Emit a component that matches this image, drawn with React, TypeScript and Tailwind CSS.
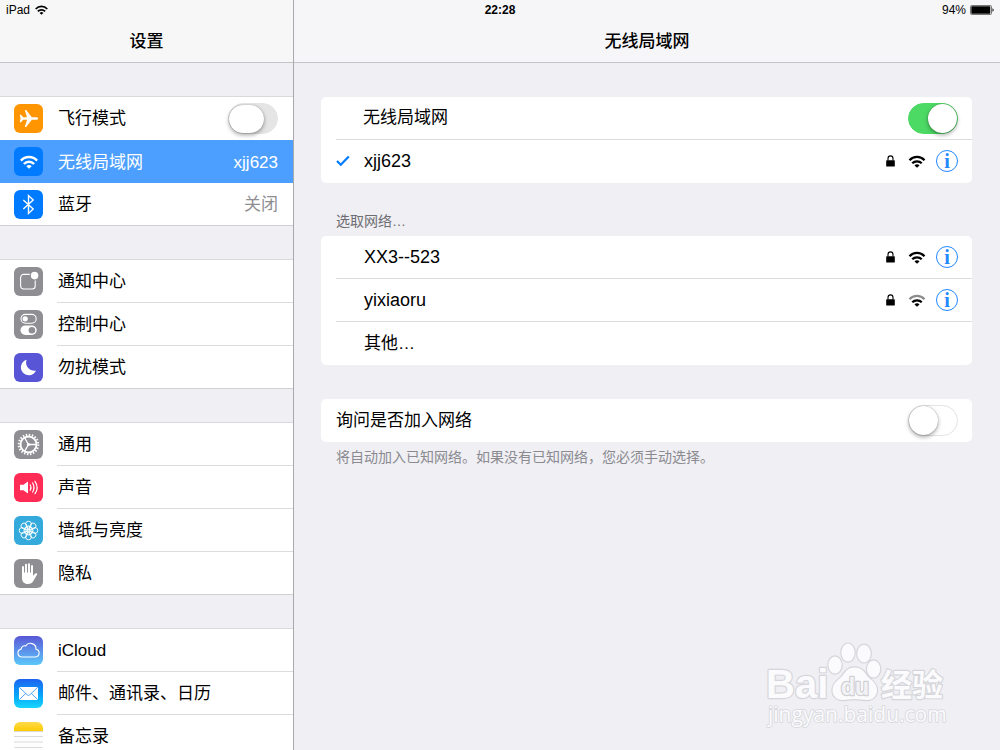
import React from 'react';

const IconAirplane = () => (
  <svg viewBox="0 0 29 29" className="h-full w-full">
    <path
      fill="#fff"
      d="M24.2 14.500c0 .8-1 1.300-2.200 1.300h-4.200l-5.600 7.100h-1.400l2.200-7.100H9.200L7 18.200H5.800l.7-3.700-.7-3.700H7l2.200 2.400h3.800l-2.200-7.100h1.400l5.600 7.100H22c1.200 0 2.200.5 2.200 1.300z"
    />
  </svg>
);

const WifiGlyph: React.FC<{ className?: string; weak?: boolean }> = ({ className, weak }) => (
  <svg viewBox="0 0 18 14" className={className} fill="none" stroke="currentColor">
    <path d="M.9 5.600a11 11 0 0 1 16.200 0" strokeWidth="2.4" opacity={weak ? 0.45 : 1} />
    <path d="M3.900 9a7 7 0 0 1 10.200 0" strokeWidth="2.4" />
    <path d="M9 13.800l-2.700-2.600a3.700 3.700 0 0 1 5.400 0z" fill="currentColor" stroke="none" />
  </svg>
);

const IconWifiTile = () => (
  <span className="flex h-full w-full items-center justify-center text-white">
    <WifiGlyph className="h-[14px] w-[18px]" />
  </span>
);

const IconBluetooth = () => (
  <svg viewBox="0 0 29 29" className="h-full w-full" fill="none" stroke="#fff" strokeWidth="1.4">
    <path d="M9.3 10l9.9 9-4.7 4.400V5.600l4.700 4.400-9.900 9" />
  </svg>
);

const IconNotifications = () => (
  <svg viewBox="0 0 29 29" className="h-full w-full">
    <rect x="6.6" y="7.4" width="14.6" height="14.6" rx="3" fill="none" stroke="#fff" strokeWidth="1.1" />
    <circle cx="20.6" cy="8.6" r="4.4" fill="#fff" stroke="#8e8e93" strokeWidth="1.2" />
  </svg>
);

const IconControl = () => (
  <svg viewBox="0 0 29 29" className="h-full w-full">
    <rect x="7" y="4.4" width="15.2" height="8.8" rx="4.4" fill="none" stroke="#fff" strokeWidth="1.1" />
    <circle cx="11.2" cy="8.8" r="2.6" fill="#fff" />
    <rect x="6.5" y="15.4" width="16.2" height="9.6" rx="4.8" fill="#fff" />
    <circle cx="17.9" cy="20.2" r="3.3" fill="#8e8e93" />
  </svg>
);

const IconMoon = () => (
  <svg viewBox="0 0 29 29" className="h-full w-full">
    <path fill="#fff" d="M12.6 6.8a7.900 7.900 0 1 0 9.400 10.800A8.200 8.200 0 0 1 12.600 6.800z" />
  </svg>
);

const IconGear = () => (
  <svg viewBox="0 0 29 29" className="h-full w-full" fill="none" stroke="#fff">
    <circle cx="14.5" cy="14.5" r="9.8" strokeWidth="2" strokeDasharray="1.5 1.58" />
    <circle cx="14.5" cy="14.5" r="8" strokeWidth="1.9" />
    <path d="M14.5 14.500h7.500M14.500 14.500l-3.800-6.600M14.500 14.500l-3.800 6.600" strokeWidth="1.3" />
    <circle cx="14.5" cy="14.5" r="1.6" fill="#fff" stroke="none" />
  </svg>
);

const IconSound = () => (
  <svg viewBox="0 0 29 29" className="h-full w-full" fill="none" stroke="#fff" strokeLinecap="round">
    <path d="M6 11.800h3.400l4.600-3.400v12.200l-4.600-3.400H6z" fill="#fff" stroke="none" />
    <path d="M16.200 11.800q1.600 2.700 0 5.400M18.600 10q2.800 4.500 0 9M21 8.300q4.200 6.200 0 12.400" strokeWidth="1.2" />
  </svg>
);

const IconFlower = () => (
  <svg viewBox="0 0 29 29" className="h-full w-full" fill="none" stroke="#fff" strokeWidth="0.9">
    {[0, 45, 90, 135, 180, 225, 270, 315].map(angle => (
      <g key={angle} transform={`rotate(${angle} 14.5 14.5)`}>
        <circle cx="14.5" cy="8.1" r="2.9" />
        <ellipse cx="14.5" cy="11.8" rx="1.3" ry="1.9" />
      </g>
    ))}
  </svg>
);

const IconHand = () => (
  <svg viewBox="0 0 29 29" className="h-full w-full" fill="none" stroke="#fff" strokeLinecap="round">
    <path d="M9 8v8M12 5.800v10M15 5.200v10M18 7v9" strokeWidth="2" />
    <path
      fill="#fff"
      stroke="none"
      d="M8 13.500h11v3.600c1.200-1.600 2.200-3 3.600-2.800.8.1.8.6.5 1.200l-3.600 6.300c-1.300 2.200-2.900 3.200-5.600 3.200-3.800 0-5.900-2.200-5.900-6z"
    />
  </svg>
);

const IconCloud = () => (
  <svg viewBox="0 0 29 29" className="h-full w-full" fill="none" stroke="#fff" strokeWidth="1.1">
    <path d="M7.800 21a4 4 0 0 1-.7-7.900 3.600 3.600 0 0 1 4.600-3.200 5.600 5.600 0 0 1 10.300 3.400 3.900 3.900 0 0 1-.4 7.700z" />
  </svg>
);

const IconMail = () => (
  <svg viewBox="0 0 29 29" className="h-full w-full" fill="none" stroke="#3a9bf8" strokeWidth="0.9">
    <rect x="5" y="8" width="19" height="13" rx="1.2" fill="#fff" stroke="none" />
    <path d="M5.400 8.400l7.800 7.400q1.300 1.100 2.600 0l7.800-7.400M5.400 20.600l6.300-6.200M23.600 20.600l-6.300-6.200" />
  </svg>
);

const IconNotes = () => (
  <svg viewBox="0 0 29 29" className="h-full w-full">
    <defs>
      <linearGradient id="notes" x1="0" y1="0" x2="0" y2="1">
        <stop offset="0" stopColor="#ffdb4c" />
        <stop offset="1" stopColor="#fecb02" />
      </linearGradient>
    </defs>
    <rect width="29" height="29" fill="#fdfdfd" />
    <rect width="29" height="9" fill="url(#notes)" />
    <path d="M0 9.500h29M0 14.500h29M0 20h29M0 25.500h29" stroke="#cfcfd2" strokeWidth="0.8" />
  </svg>
);

const LockGlyph = () => (
  <svg viewBox="0 0 15 12" className="h-3 w-[15px]">
    <path d="M5 5.500V3.400a2.500 2.500 0 0 1 5 0v2.100" fill="none" stroke="#000" strokeWidth="1.1" />
    <rect x="3.2" y="5.2" width="8.6" height="6.3" rx="0.6" />
  </svg>
);

const CheckGlyph = () => (
  <svg viewBox="0 0 14 12" className="h-3 w-[14px]" fill="none" stroke="#007aff" strokeWidth="2.2">
    <path d="M1 6l3.800 3.800L12.800 1.600" />
  </svg>
);

type Item = { label: string; icon: React.ReactNode; tile: string; value?: string; active?: boolean };

const network: Item[] = [
  { label: '无线局域网', icon: <IconWifiTile />, tile: 'bg-[#007aff]', value: 'xjj623', active: true },
  { label: '蓝牙', icon: <IconBluetooth />, tile: 'bg-[#007aff]', value: '关闭' },
];

const groups: Item[][] = [
  [
    { label: '通知中心', icon: <IconNotifications />, tile: 'bg-[#8e8e93]' },
    { label: '控制中心', icon: <IconControl />, tile: 'bg-[#8e8e93]' },
    { label: '勿扰模式', icon: <IconMoon />, tile: 'bg-[#5856d6]' },
  ],
  [
    { label: '通用', icon: <IconGear />, tile: 'bg-[#8e8e93]' },
    { label: '声音', icon: <IconSound />, tile: 'bg-[#ff2d55]' },
    { label: '墙纸与亮度', icon: <IconFlower />, tile: 'bg-[#34aadc]' },
    { label: '隐私', icon: <IconHand />, tile: 'bg-[#8e8e93]' },
  ],
  [
    { label: 'iCloud', icon: <IconCloud />, tile: 'bg-linear-to-b from-[#5856d6] to-[#5ac8fa]' },
    { label: '邮件、通讯录、日历', icon: <IconMail />, tile: 'bg-linear-to-b from-[#1d62f0] to-[#1ad5fd]' },
    { label: '备忘录', icon: <IconNotes />, tile: 'bg-white' },
  ],
];

const Tile: React.FC<{ tile: string; children: React.ReactNode }> = ({ tile, children }) => (
  <span className={`h-[29px] w-[29px] shrink-0 overflow-hidden rounded-[6px] ${tile}`}>{children}</span>
);

const groupClass = 'border-b border-[#d0d0d4] bg-white shadow-[0_-1px_0_#d9d9dd]';

const SidebarRow: React.FC<{ item: Item; last: boolean }> = ({ item, last }) => (
  <li className={item.active ? 'bg-[#4c9fff]' : ''}>
    <a href="#" className={`flex items-center pl-[14px] ${last ? 'h-[42px]' : 'h-[43px]'}`}>
      <Tile tile={item.tile}>{item.icon}</Tile>
      <span
        className={`ml-[14px] flex h-full flex-1 items-center justify-between pt-[2px] pr-[15px] pl-px ${
          last || item.active ? '' : 'border-b border-[#dcdcdf]'
        } ${item.active ? 'text-white' : ''}`}
      >
        <span>{item.label}</span>
        {item.value && <span className={item.active ? '' : 'text-[#8e8e93]'}>{item.value}</span>}
      </span>
    </a>
  </li>
);

const Switch: React.FC<{ id: string; defaultChecked?: boolean }> = ({ id, defaultChecked }) => (
  <input
    id={id}
    type="checkbox"
    role="switch"
    defaultChecked={defaultChecked}
    className="flex h-[31px] w-[50px] shrink-0 appearance-none items-center rounded-full border border-[#e3e3e5] bg-white before:h-[29px] before:w-[29px] before:rounded-full before:bg-white before:shadow-[0_2px_4px_rgba(0,0,0,0.35),0_0_1px_rgba(0,0,0,0.4)] checked:justify-end checked:border-[#4cd964] checked:bg-[#4cd964]"
  />
);

const InfoButton: React.FC<{ name: string }> = ({ name }) => (
  <button
    type="button"
    aria-label={name}
    className="flex h-[22px] w-[22px] items-center justify-center rounded-full border border-[#1f88ff] font-['Liberation_Serif',serif] text-[20px] leading-5 font-bold text-[#1f88ff]"
  >
    i
  </button>
);

const NetworkRow: React.FC<{ name: string; checked?: boolean; weak?: boolean; last?: boolean }> = ({
  name,
  checked,
  weak,
  last,
}) => (
  <li
    className={`ml-[15px] flex h-[43px] items-center gap-[10px] border-b pr-[14px] ${
      last ? 'border-transparent' : 'border-[#dcdcdf]'
    }`}
  >
    <button type="button" className="flex h-full flex-1 items-center text-left text-lg">
      <span className="w-7 shrink-0">{checked && <CheckGlyph />}</span>
      {name}
    </button>
    <LockGlyph />
    <WifiGlyph className="h-[13px] w-[18px]" weak={weak} />
    <InfoButton name={name} />
  </li>
);

const StatusBar = () => (
  <div className="absolute inset-x-0 top-0 z-10 grid h-5 grid-cols-3 items-center px-[6px] text-xs">
    <span className="flex items-center gap-[5px]">
      iPad
      <WifiGlyph className="h-[10px] w-[13px]" />
    </span>
    <span className="text-center font-bold">22:28</span>
    <span className="flex items-center justify-end gap-1">
      94%
      <svg viewBox="0 0 24 10" className="h-[10px] w-6">
        <rect x="0.5" y="0.5" width="21" height="9" rx="1.2" fill="#fff" stroke="#555" strokeWidth="0.8" />
        <rect x="1.3" y="1.3" width="19" height="7.4" rx="0.4" />
        <path d="M22.500 3.200a2 2 0 0 1 0 3.600z" />
      </svg>
    </span>
  </div>
);

const Watermark = () => (
  <svg
    viewBox="0 0 182 90"
    className="pointer-events-none absolute right-[52px] bottom-[19px] h-[90px] w-[182px]"
    fill="#fbfbfd"
    stroke="#d6d6da"
    strokeWidth="2.4"
    strokeLinejoin="round"
    paintOrder="stroke"
  >
    <text x="0" y="57" fontSize="40" fontWeight="700">Bai</text>
    <ellipse cx="69" cy="24" rx="6.6" ry="8.6" />
    <ellipse cx="82" cy="11.6" rx="6.6" ry="9" />
    <ellipse cx="98" cy="12.6" rx="6.8" ry="8.8" />
    <ellipse cx="107.6" cy="28" rx="6.6" ry="8.6" />
    <path d="M88.500 26.500c6 0 9.500 3.500 12 7.500s10.500 7 10.500 15c0 6-4 10-9.500 10-5 0-8-1-13-1s-7 1-12 1c-6 0-10-4-10-10 0-8 7.500-10.500 10.500-15s5.500-7.500 11.500-7.500z" />
    <text x="75" y="54" fontSize="23" fontWeight="700" fill="#f3f3f6" stroke="#cfcfd4">du</text>
    <text x="115" y="55" fontSize="31" fontWeight="700">经验</text>
    <text x="2" y="81" fontSize="21" fontFamily="Open Sans" strokeWidth="1.6">jingyan.baidu.com</text>
  </svg>
);

const App: React.FC = () => {
  return (
    <div className="relative flex h-screen overflow-hidden bg-[#efeff4] font-['Liberation_Sans','Noto_Sans_CJK_SC',sans-serif] text-[17px] leading-6 text-black">
      <StatusBar />

      <aside className="flex w-[294px] shrink-0 flex-col border-r border-[#a9a9ad]">
        <header className="flex h-[63px] shrink-0 items-center justify-center border-b border-[#c4c4c7] bg-[#f7f7f7] pt-[22px]">
          <h1 className="font-medium">设置</h1>
        </header>
        <nav className="flex flex-1 flex-col gap-[34px] overflow-y-auto pt-[34px] [scrollbar-width:none]">
          <ul className={groupClass}>
            <li>
              <label htmlFor="airplane" className="flex h-[43px] items-center pr-[15px] pl-[14px]">
                <Tile tile="bg-[#ff9500]"><IconAirplane /></Tile>
                <span className="ml-[15px] flex-1">飞行模式</span>
                {/* held down: the knob stretches */}
                <input
                  id="airplane"
                  type="checkbox"
                  role="switch"
                  className="flex h-[31px] w-[50px] appearance-none items-center rounded-full border border-[#e5e5e5] bg-[#e5e5e5] before:h-[28px] before:w-[35px] before:rounded-full before:bg-white before:shadow-[0_2px_4px_rgba(0,0,0,0.35),0_0_1px_rgba(0,0,0,0.4)] checked:justify-end checked:bg-[#4cd964]"
                />
              </label>
            </li>
            {network.map((item, i) => (
              <SidebarRow key={item.label} item={item} last={i === network.length - 1} />
            ))}
          </ul>
          {groups.map((items, g) => (
            <ul key={g} className={groupClass}>
              {items.map((item, i) => (
                <SidebarRow key={item.label} item={item} last={i === items.length - 1} />
              ))}
            </ul>
          ))}
        </nav>
      </aside>

      <main className="flex min-w-0 flex-1 flex-col">
        <header className="flex h-[63px] shrink-0 items-center justify-center border-b border-[#c4c4c7] bg-[#f6f6f8] pt-[22px]">
          <h2 className="font-medium">无线局域网</h2>
        </header>
        <div className="flex-1 overflow-y-auto pt-[34px] pr-7 pl-[27px] [scrollbar-width:none]">
          <ul className="rounded-[5px] bg-white">
            <li className="ml-[15px] border-b border-[#dcdcdf]">
              <label htmlFor="wlan" className="flex h-[42px] items-center justify-between pr-[14px] pl-[27px]">
                无线局域网
                <Switch id="wlan" defaultChecked />
              </label>
            </li>
            <NetworkRow name="xjj623" checked last />
          </ul>

          <h3 className="mt-7 mb-[5px] pl-[15px] text-sm leading-5 text-[#6d6d72]">选取网络…</h3>
          <ul className="rounded-[5px] bg-white">
            <NetworkRow name="XX3--523" />
            <NetworkRow name="yixiaoru" weak />
            <li>
              <button type="button" className="h-[43px] w-full pl-[43px] text-left">其他…</button>
            </li>
          </ul>

          <div className="mt-[34px] rounded-[5px] bg-white">
            <label htmlFor="ask" className="flex h-[43px] items-center justify-between pr-[14px] pl-[15px]">
              询问是否加入网络
              <Switch id="ask" />
            </label>
          </div>
          <p className="mt-[5px] pl-[15px] text-sm leading-5 text-[#8a8a8f]">
            将自动加入已知网络。如果没有已知网络，您必须手动选择。
          </p>
        </div>
      </main>

      <Watermark />
    </div>
  );
};

export default App;
